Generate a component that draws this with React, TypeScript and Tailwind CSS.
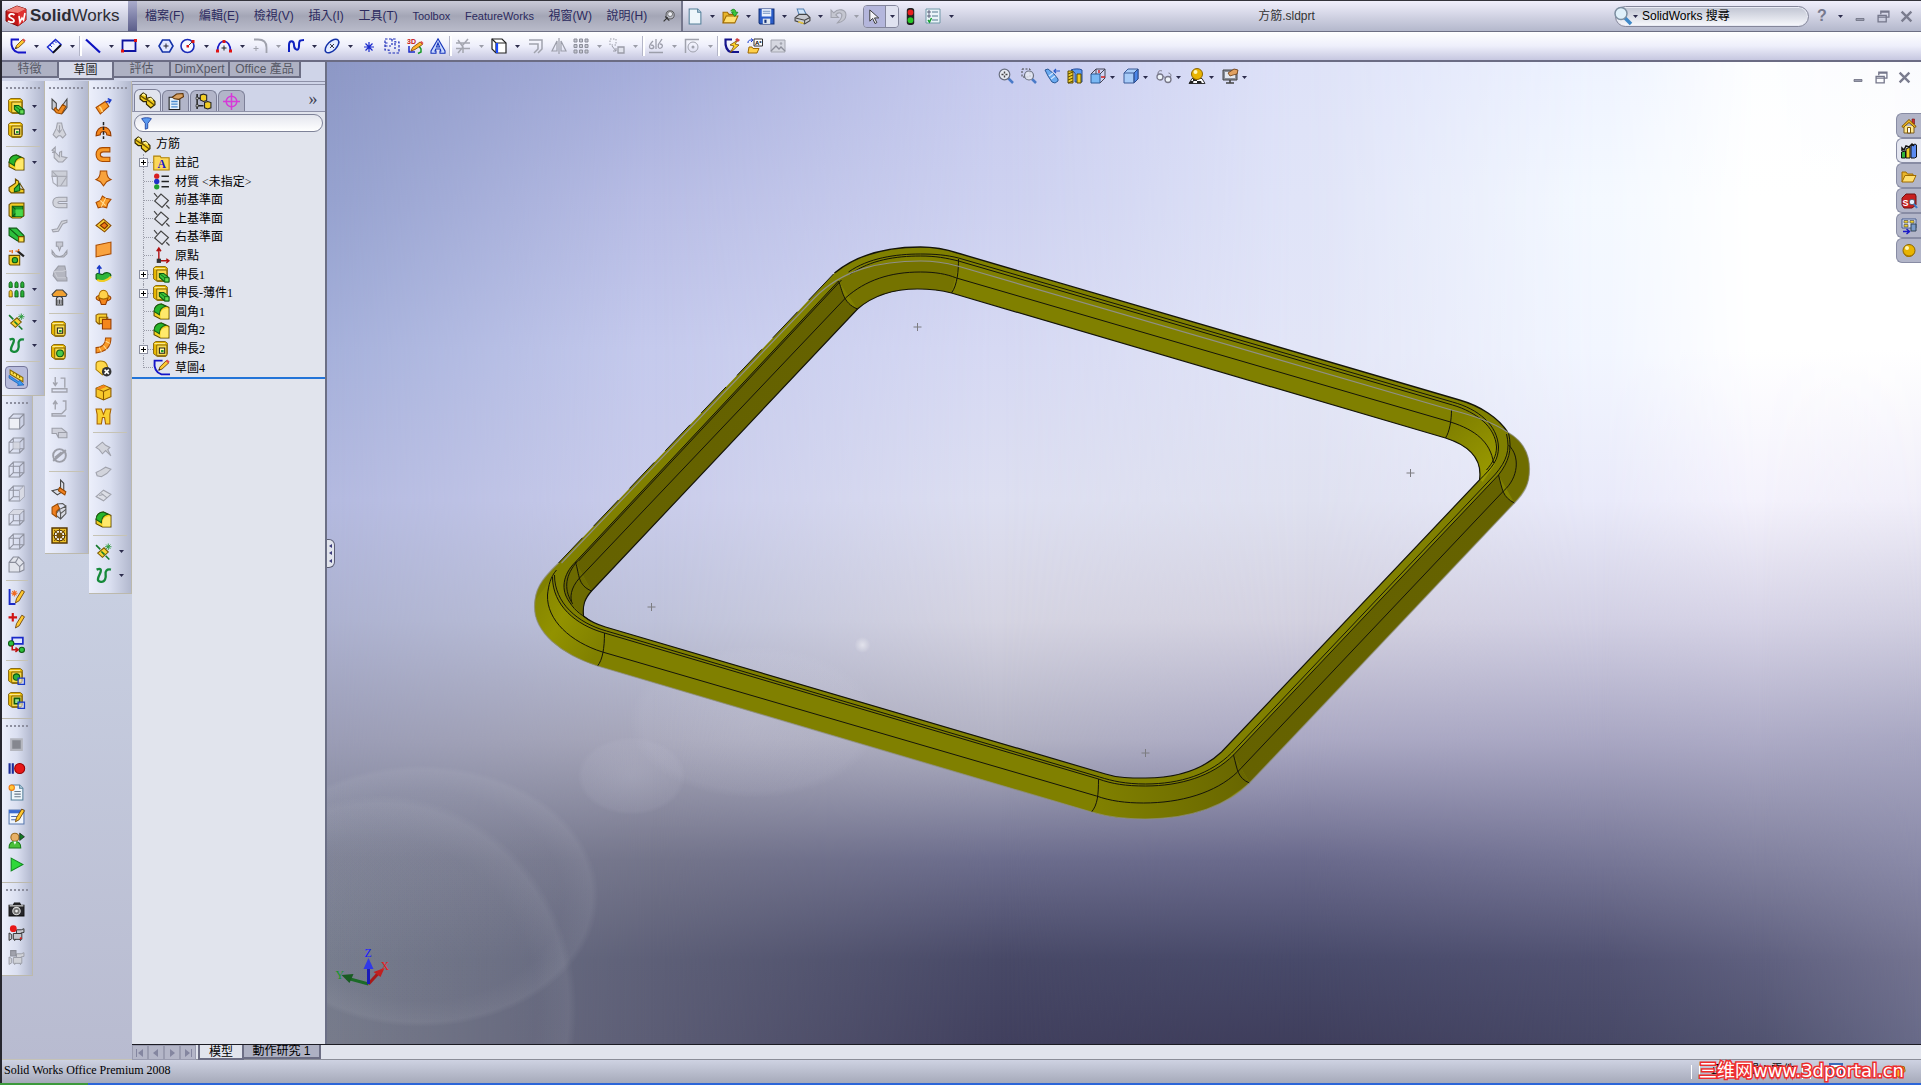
import React from "react";

type Glyphs = Record<string, React.ReactNode>;

/* ---------- icon building blocks ---------- */
const yellowBlock = (
  <>
    <path d="M.5 2 2.500.5h9l2 1.500V12l-1.500 2.500H4L.5 12z" fill="#e8b800" stroke="#7a5a00" strokeWidth=".8" />
    <path d="M1.300 2.500h10.200" fill="none" stroke="#fff0a0" strokeWidth="1" />
    <path d="M3.500 3.800H13v10H3.500z" fill="#f9da4a" stroke="#7a5a00" strokeWidth=".8" />
  </>
);
const pencil = (
  <>
    <path d="m5.500 10.500 1-3 6-6 2.500 2-6.500 6z" fill="#ffc930" stroke="#6b3e00" strokeWidth=".8" />
    <path d="m12 2 1.500-1.500 2.200 2L14.300 4z" fill="#e05050" />
    <path d="m5 11 .8-2 1.200 1.200z" fill="#222" />
  </>
);
const wireCube = (
  <path d="M1 5h10v10H1zM5 1h10v10H5zM1 5l4-4M11 5l4-4M11 15l4-4M1 15l4-4" fill="none" stroke="#9093a0" />
);
const fillet = (
  <>
    <path d="M1 8C1 4 4 1 8 1l7 3v11H7l-6-3z" fill="#f4d21f" stroke="#5d4700" />
    <path d="M1 8C1 4 4 1 8 1l4 2C8 4 6 6 6 11L1 8z" fill="#27b52b" stroke="#145c14" />
    <path d="M7 14.500V11c0-4 3-6 7.500-6v9.500z" fill="#ffe96b" />
  </>
);
const extrude = (
  <>
    {yellowBlock}
    <path d="M6 7h4l5 4v4h-4L6 10.500z" fill="#3ac43a" stroke="#0d5a12" />
    <path d="M11 11h4v4h-4zM6 7l5 4" fill="#66dd55" stroke="#0d5a12" strokeWidth=".8" />
  </>
);
const cut = (
  <>
    {yellowBlock}
    <path d="M6 6.500h5v5H6z" fill="#fff6a8" stroke="#222" />
    <path d="M7.500 8.500h2.500v2H7.500z" fill="#1c9a2a" />
  </>
);
const refGeom = (
  <>
    <path d="m1 2 4 4M10 12l3.500 3.500" stroke="#167a2a" strokeWidth="1.500" />
    <path d="m2.500 9.500 6-5 4 4-5.500 5z" fill="#f8d432" stroke="#7a5a00" />
    <path d="M12.500.5v6M9.500 3.500h6M10.500 1.500l4 4M14.500 1.500l-4 4" stroke="#2d9a3c" strokeWidth=".9" />
    <path d="m6 8 3 3" stroke="#167a2a" strokeWidth="1.500" />
  </>
);
const curve = (
  <path d="M1.500 2.500c4-2 5 0 3 4s-3 7 1 7.500 5-4 4.500-7 1-5.500 5-4.500" fill="none" stroke="#168a3a" strokeWidth="2.200" />
);
const partGold = (
  <>
    <path d="M1 3.500 4 1l3 2v3l4-1 4 4v3l-4 3-4-3.500V9L4 9 1 6.500z" fill="#f1cc1d" stroke="#332800" strokeWidth="1.100" />
    <path d="m2 4 3 2 5 3 4 3M7 6l3 3" fill="none" stroke="#6b5200" strokeWidth="1.200" />
    <path d="m3 3 1.500-1L6 3.500M9 7l2-1 2 2" fill="none" stroke="#fff7a0" strokeWidth="1.300" />
  </>
);
const sheet = (
  <>
    <path d="M3 1h8l3 3v11H3z" fill="#eef6fb" stroke="#55809a" />
    <path d="M11 1v3h3" fill="#bcd6e4" stroke="#55809a" />
  </>
);
const folder = (
  <>
    <path d="M1 14V4h4l1.500 2H12v2" fill="#e9b52b" stroke="#a06b00" />
    <path d="M1 14 4 7.500h11L12 14z" fill="#ffdf70" stroke="#a06b00" />
  </>
);
const goldSphere = (
  <>
    <circle cx="8" cy="7.500" r="6" fill="#e9b400" stroke="#8b6500" />
    <path d="M3 9c1 4 8 5 10.500.5C12 13 9 14 8 14c-3 0-5-2-5-5" fill="#a97800" />
    <circle cx="6" cy="5" r="2" fill="#fff6b8" />
  </>
);
const camcorder = (c: string, d: string) => (
  <>
    <path d="M1 7.500 3.500 9v4L1 14.500zM5 8h8v5.500H5z" fill={c} stroke={d} strokeWidth=".9" />
    <path d="M8 7.500V4.500h4.500L15 3.500V7l-3 .5M6 15l1-1.500M12 15l-1-1.500" fill={c} stroke={d} strokeWidth=".9" />
  </>
);

const glyphs: Glyphs = {
  /* sketch toolbar */
  "Exit sketch": (<><path d="M9 1.500H1.500C.8 8 3 13 8 14.500h8" fill="none" stroke="#1414c8" strokeWidth="1.800" />{pencil}</>),
  "Smart dimension": (<><path d="m1.500 9 8-7.500 5.500 5-8 8z" fill="#f4f8ff" stroke="#1a2acc" strokeWidth="1.500" /><path d="m4 7 2 2M6.500 5l1.500 1.500M8.500 3l2 2" stroke="#1a2acc" /><path d="M7 14.800 15 7" stroke="#111" strokeWidth="1.800" /></>),
  Line: <path d="m1 1.500 14 13" stroke="#0d12c0" strokeWidth="2.200" />,
  Rectangle: (<><path d="M1.500 2.500h13v10.500h-13z" fill="#eef" stroke="#0d12a0" strokeWidth="1.800" /><path d="M0 11.500h3v3H0zM13 1h3v3h-3z" fill="#e01414" /></>),
  Polygon: (<><path d="M4.500 2h7L15 8l-3.500 6h-7L1 8z" fill="#e2e8ff" stroke="#1432a8" strokeWidth="1.600" /><path d="M8 5.500v5M5.500 8h5" stroke="#223" /></>),
  Circle: (<><circle cx="7.500" cy="8" r="6.500" fill="#f4f6ff" stroke="#1a2ab8" strokeWidth="1.600" /><path d="m8 8 4.500-4.500" stroke="#333" /><path d="M6.500 7h2.500v2.500H6.500zM11.500 2h3v3h-3z" fill="#d81414" /></>),
  Arc: (<><path d="M1.500 13C1.500 0 14.500 0 14.500 13" fill="none" stroke="#1a1ac8" strokeWidth="1.700" /><path d="M0 11.500h3v3H0zM13 11.500h3v3h-3zM6.500 2h3v3h-3z" fill="#e01414" /><path d="M8 7.500v5M5.500 10h5" stroke="#222" /></>),
  "Sketch fillet": (<><path d="M2 1.500h4c6 0 8.500 3 8.500 8V15" fill="none" stroke="#a0a2ad" strokeWidth="1.800" /><path d="M4 8v5M1.500 10.500h5" stroke="#a0a2ad" /></>),
  Spline: <path d="M1 14V7c0-5 5-5 5 0s5 7 5 1c0-5 0-6 5-6" fill="none" stroke="#0e20c0" strokeWidth="2" />,
  Ellipse: (<><ellipse cx="8" cy="8" rx="8.500" ry="4.500" transform="rotate(-45 8 8)" fill="#e4ecff" stroke="#1432a8" strokeWidth="1.500" /><path d="m6 6 4 4M10 6l-4 4" stroke="#223" strokeWidth=".9" /></>),
  Point: <path d="M8 4v10M3 9h10M4.500 5.500l7 7M11.500 5.500l-7 7" stroke="#1a2acc" strokeWidth="1.200" />,
  "Construction area": <path d="M1 1h10v3h4v11H5v-3H1zM1 5h4M11 5v6M1 8h6M8 1v6" fill="none" stroke="#1a2ab8" strokeWidth="1.200" strokeDasharray="2.500 1.500" />,
  "3D sketch": (<><text x="0" y="5.500" fontSize="7" fontWeight="700" fill="#c81414" fontFamily="Liberation Sans, sans-serif">3D</text><path d="M2 8v6h6" fill="none" stroke="#1a2ac8" strokeWidth="1.500" /><path d="m12 8 2 3v3l-3 1.500" fill="none" stroke="#1a9a2a" strokeWidth="1.500" /><path d="m4 13 1.500-3.500L13 4l2.500 2.500-7.500 5z" fill="#ffb52b" stroke="#7a3e00" strokeWidth=".8" /><path d="m13 4 1.500-1 2 2-1 1.500z" fill="#e05050" /></>),
  "Sketch text": <path d="M8 .8 15 13v2.200H10V13h.8l-.6-2H5.800L5 13h1v2.200H1V13L6.500 3.500zM8 5 6.500 9h3z" fill="#c8d8ff" stroke="#1432b8" strokeWidth="1.100" />,
  Trim: <path d="M1 5h14M1 10.500h14M3 2l5 7v6M13 1 7 8M3 15l5-6" fill="none" stroke="#a4a6b0" strokeWidth="1.500" />,
  "Convert entities": (<><path d="M1 1h10l4 4v10H5L1 11z" fill="#fff" stroke="#222" strokeWidth="1.200" /><path d="M1 1l4 4h10M5 5v10" fill="none" stroke="#222" strokeWidth="1.200" /><path d="M6 5v10" stroke="#1a4aff" strokeWidth="2.200" /></>),
  Offset: <path d="M1 2h13v9l-4 4M1 6h9v5l-4 4" fill="none" stroke="#a0a2ad" strokeWidth="1.500" />,
  Mirror: <path d="M8 0v16M6 3v10H1zM10 3v10h5z" fill="none" stroke="#9c9eaa" strokeWidth="1.200" />,
  "Linear pattern": <path d="M1 1h3v3H1zM6.500 1h3v3h-3zM12 1h3v3h-3zM1 6.500h3v3H1zM6.500 6.500h3v3h-3zM12 6.500h3v3h-3zM1 12h3v3H1zM6.500 12h3v3h-3zM12 12h3v3h-3z" fill="#c4c6d0" stroke="#8c8e9a" />,
  "Move entities": (<><path d="M1 1h6v6H1z" fill="none" stroke="#999ba6" strokeDasharray="1.500 1.500" /><path d="M9 9h6v6H9z" fill="#e0e2ec" stroke="#999ba6" strokeWidth="1.300" /><path d="m3 8 4 5M7 10v3H4" fill="none" stroke="#999ba6" /></>),
  "Display relations": <path d="M1 14.500h14M8 1v10M5 3C0 8 1 11 4 10.500S6 7 3 7M11 6c-2 3 0 5 2 4s2-4-1-4M14 1l-4 6" fill="none" stroke="#9c9eaa" strokeWidth="1.300" />,
  "Quick snaps": (<><path d="M1.500 15V1.500H15" fill="none" stroke="#a0a2ad" strokeWidth="1.500" /><circle cx="9" cy="9" r="5" fill="none" stroke="#a0a2ad" /><circle cx="9" cy="9" r="1.500" fill="#a0a2ad" /></>),
  "Rapid sketch": (<><path d="M8 1.500H1.500C1 9 3 13 7 14h8" fill="none" stroke="#14148c" strokeWidth="2.200" /><path d="m14 2-8 5 4 1-4 7 9-8-4-1z" fill="#ffd52b" stroke="#7a4a00" strokeWidth=".8" /><path d="m13 0 3 2-2 2-3-2z" fill="#d04040" /></>),
  "Insert block": (<><path d="M7 1h8.500v7H7z" fill="#fff" stroke="#333" /><text x="8" y="7" fontSize="6" fontWeight="700" fontFamily="Liberation Sans, sans-serif">A*</text><path d="M1 5c0-3 2-3 4-3M4 .5 6 2 4 4" fill="none" stroke="#1a3acc" /><path d="m1 15 1-6h3l1 1.500h6L10 15z" fill="#ffd04a" stroke="#a06b00" /></>),
  "Sketch picture": (<><path d="M1 2h14v12H1z" fill="#d5d7e0" stroke="#a4a6b0" /><path d="m1 13 5-5 3 3 2-2 4 4" fill="none" stroke="#8c8e9a" strokeWidth="1.300" /><circle cx="11" cy="5.500" r="1.300" fill="#a4a6b0" /></>),
  /* standard toolbar */
  New: sheet,
  Open: (<>{folder}<path d="M8 3c2-3 5-2 5 1h2l-3 4-3-4h2" fill="#3cc83c" stroke="#0e7a1a" strokeWidth=".7" /></>),
  Save: (<><path d="M1 1h14v14H2l-1-1z" fill="#2a5cc8" stroke="#123078" /><path d="M3.500 1h9v7h-9z" fill="#eaf2ff" /><path d="M4.500 3h7M4.500 5h7" stroke="#7090c0" /><path d="M4.500 10h7v5h-7z" fill="#dfe6ee" /><path d="M6 11h2v3H6z" fill="#123078" /></>),
  Print: (<><path d="m5 7-2-6h6l3 6" fill="#cfe4fa" stroke="#5480b0" /><path d="m1 9 4-3h7l3 3v3l-5 3-9-3z" fill="#c8cad0" stroke="#444" /><path d="m1.500 9.500 8.500 2 5-2.500M10 12v3" fill="none" stroke="#444" /><path d="m4 13 5 1.500" stroke="#e8c840" strokeWidth="1.500" /></>),
  Undo: <path d="M1 2v7h7L5.500 6.500C8 3 12 5 11 8c-.5 3-3 4.500-4 6 5-1 8-4 8-7.500C15 1.500 8-.5 3.500 4.500z" fill="#c4c6d0" stroke="#a0a2ad" />,
  Select: <path d="M3 1v12l3-3 2.500 5.500 2-1L8 9.500h4.500z" fill="#f4f4f8" stroke="#333" />,
  Rebuild: (<><rect x="4.500" y="0" width="7" height="16" rx="2.500" fill="#222" /><circle cx="8" cy="4.200" r="2.700" fill="#e82020" /><circle cx="8" cy="11.500" r="2.700" fill="#28c828" /></>),
  Options: (<><path d="M1 1h14v14H1z" fill="#eaf4f8" stroke="#7098a8" /><path d="M3 3h2v2H3zM3 7h2v2H3z" fill="none" stroke="#446" strokeWidth=".8" /><path d="M7 4h6M7 8h6M7 12h6" stroke="#557a90" strokeWidth="1.200" /><path d="m3 12 1.500 2L6.500 10" fill="none" stroke="#16a030" strokeWidth="1.500" /></>),
  Pin: (<><circle cx="10" cy="6" r="5" fill="#b8bac4" stroke="#444" /><circle cx="10" cy="5" r="3" fill="#eceef4" stroke="#666" /><path d="m7 9-5 5M4 8l5 5" stroke="#333" strokeWidth="1.400" /></>),
  /* features column */
  Extrude: extrude,
  "Extruded cut": cut,
  Fillet: fillet,
  Rib: (<><path d="m1 9 6-4V1l3 2v7l5 1v3H3l-2-2z" fill="#f2cd24" stroke="#6b4e00" /><path d="m6 10 5-5v7l-5 1z" fill="#2fb53a" stroke="#0d5a12" /><path d="m11 5 4 6" stroke="#6b4e00" /></>),
  Shell: (<><path d="M1 2.500 3 1h12v12l-3 2H4l-3-2z" fill="#f2cd24" stroke="#6b4e00" /><path d="M4 4h10v9.500H4z" fill="#1c9a2a" stroke="#0d5a12" /><path d="M7 7h7v6.500H7z" fill="#4ad84a" /><path d="m4 4 3 3M4 13.500 7 11" stroke="#0d5a12" /></>),
  Draft: (<><path d="M1 2h7l7 7v5H9L1 9z" fill="#2cc03c" stroke="#0d5a12" /><path d="m1 2 9 8h5M10 10v5" fill="none" stroke="#0d5a12" /><path d="M10 10h5v5h-5z" fill="#ffe04a" stroke="#6b4e00" /></>),
  "Hole wizard": (<><path d="M1 6h10v9H2l-1-1z" fill="#f2cd24" stroke="#6b4e00" /><circle cx="6.500" cy="10.500" r="2.500" fill="#2fb53a" stroke="#0d5a12" /><path d="m9 2 6 5" stroke="#222" strokeWidth="2" /><path d="M1 2h2M4 1v3M7 2h2M10 0v2" stroke="#e86a10" strokeWidth="1.300" /></>),
  Pattern: (<><path d="M1 3c0-3 3-3 3 0v3H1zM6.500 3c0-3 3-3 3 0v3h-3zM12 3c0-3 3-3 3 0v3h-3zM6.500 11c0-3 3-3 3 0v4h-3zM12 11c0-3 3-3 3 0v4h-3z" fill="#28b038" stroke="#0d5a12" strokeWidth=".8" /><path d="M1 11c0-3 3-3 3 0v4H1z" fill="#f2cd24" stroke="#6b4e00" strokeWidth=".8" /></>),
  "Reference geometry": refGeom,
  Curves: curve,
  Instant3D: (<><path d="m2 1 12 7v4L2 5z" fill="#ffe14a" stroke="#8a6a00" /><path d="M5 3v2M8 4.500v2.500M11 6.500v2" stroke="#8a6a00" /><path d="m1 6 9 6 .8-1.500L15 15l-6 .5.800-1.500L1 8.500z" fill="#3a9af0" stroke="#1a5ab0" strokeWidth=".7" /></>),
  /* view cubes */
  "Front view": (<><path d="M1 5h10v10H1z" fill="#eef0f6" stroke="#8a8d9a" /><path d="m1 5 4-4h10v10l-4 4M11 5l4-4" fill="none" stroke="#8a8d9a" /></>),
  "Back view": (<>{wireCube}<path d="M5 5h6v6H5z" fill="#d4d6e0" /></>),
  "Left view": wireCube,
  "Right view": (<>{wireCube}<path d="m11 5 4-4v10l-4 4z" fill="#d8dae4" /></>),
  "Top view": (<>{wireCube}<path d="m1 5 4-4h10l-4 4z" fill="#d8dae4" /></>),
  "Bottom view": wireCube,
  Isometric: <path d="M1 6 5 1h5l5 5v7l-4 2H1zM1 6h6l4 4v5M7 6l3-5M11 10l4-4" fill="#e2e4ec" stroke="#8a8d9a" />,
  "New sketch": (<><path d="M1.500 1v14H7" fill="none" stroke="#1a2ac8" strokeWidth="1.800" /><path d="M6 2v6M3 5h6M4 3l4 4M8 3 4 7" stroke="#f06a20" /><path d="m7 14 1-4 5-8 2.500 1.500-5 8.500z" fill="#ffc930" stroke="#6b3e00" strokeWidth=".8" /></>),
  "Add point": (<><path d="M4.500 1v8M.5 5h8" stroke="#d01414" strokeWidth="2" /><path d="m7 15 1-4 5-8 2.500 1.500-5 8.500z" fill="#ffc930" stroke="#6b3e00" strokeWidth=".8" /></>),
  "Convert path": (<><path d="M4 1.500h10v6H4z" fill="#dfe6ff" stroke="#1a2ac8" strokeWidth="1.600" /><circle cx="3" cy="7" r="2.500" fill="#2cc03c" stroke="#0d5a12" /><circle cx="13" cy="13" r="2.500" fill="#2cc03c" stroke="#0d5a12" /><path d="M4 9v4h5M7 11l2.500 2L7 15" fill="none" stroke="#c01414" strokeWidth="1.500" /></>),
  "Boss on plane": (<>{yellowBlock}<circle cx="8" cy="8.500" r="3" fill="#2cb03c" stroke="#0d5a12" /><path d="M9.500 9.500h6v6h-6z" fill="#dfe6ff88" stroke="#1a3ac8" strokeWidth="1.200" /></>),
  "Cut on plane": (<>{yellowBlock}<path d="M6 6h5v5H6z" fill="#9be08a" stroke="#0d5a12" strokeWidth="1.500" /><path d="M9.500 9.500h6v6h-6z" fill="#dfe6ff88" stroke="#1a3ac8" strokeWidth="1.200" /></>),
  /* macro */
  Stop: <path d="M3 3h10v10H3z" fill="#85878f" stroke="#b4b6be" strokeWidth="2" />,
  "Record pause": (<><path d="M1.500 3v10M4.500 3v10" stroke="#1a2a98" strokeWidth="2" /><circle cx="11" cy="8" r="4.700" fill="#e81818" stroke="#900" /></>),
  "New macro": (<>{sheet}<path d="M6 7h6M6 9.500h6M6 12h6" stroke="#6a7a8a" /><circle cx="3.500" cy="3.500" r="2.500" fill="#ffc83a" stroke="#f07a10" /></>),
  "Edit macro": (<><path d="M1 2h14v13H1z" fill="#f0f5fc" stroke="#5a7ab0" /><path d="M1 2h14v3H1z" fill="#3a6ad0" /><path d="M3 8h6M3 11h5" stroke="#4a6ab0" /><path d="m7 13 1-4 5-8 2.500 1.500-5 8.500z" fill="#ffc930" stroke="#6b3e00" strokeWidth=".8" /></>),
  "Run as user": (<><circle cx="6.500" cy="5" r="3.800" fill="#e8b068" stroke="#9a6a20" /><path d="M1 15c0-5 2-6 5.500-6s5.500 1 5.500 6z" fill="#4ac03a" stroke="#1a7a1a" /><path d="m5 9 1.500 3L8 9" fill="#fff" /><path d="m11 1 4.500 3.500L11 8z" fill="#147a24" stroke="#111" strokeWidth=".6" /></>),
  Run: <path d="m3 2 11 6L3 14z" fill="#2ed83a" stroke="#108a20" />,
  Snapshot: (<><path d="M1 4h4l1-2h5l1 2h3v10H1z" fill="#26262a" stroke="#111" /><path d="M1.500 4.500h13" stroke="#aaa" strokeWidth="1.500" /><circle cx="8" cy="9.500" r="3.500" fill="#777" stroke="#ddd" /><circle cx="8" cy="9.500" r="1.300" fill="#eee" /></>),
  "Record video": (<>{camcorder("#c4c6cc", "#333")}<circle cx="5" cy="3.500" r="3.200" fill="#e81818" /><circle cx="12" cy="12.500" r="1" fill="#e81818" /></>),
  "Stop video": (<>{camcorder("#d0d2d8", "#9a9ca6")}<path d="M2.500 1.500h5v5h-5z" fill="#a0a2ac" stroke="#8a8c96" /></>),
  /* sheet-metal column */
  "Base flange": (<><path d="m1 1 4 4v8L1 10zM10 8l5-7v8l-4 5z" fill="#c8ccd6" stroke="#444" /><path d="m4 9 3 3 4-6 3 2-4 7-5-1-2-3z" fill="#f08a20" stroke="#9a4a00" /></>),
  Cone: <path d="M6 1h4l1 5 3 6-3 3-2-2H7l-2 2-3-3 3-6zM8 3v6M6 7l2 3 2-3" fill="#d2d4dc" stroke="#a0a2ac" />,
  "Edge flange": <path d="M1 4 4 1v5l4 4V6l2-1v5l5 1-4 4H7L3 11V5zM4 6H1" fill="#d2d4dc" stroke="#a0a2ac" />,
  "Miter flange": (<><path d="M1 1h14v14H6V6H1z" fill="#cccfd8" stroke="#a8aab4" /><path d="M1 6h5v9l-4-3zM1 1l5 5M6 6h9M15 6l-6 9" fill="none" stroke="#a8aab4" /></>),
  Hem: <path d="M15 3H7C0 3 0 13 7 13h8V9H8C6 9 6 7 8 7h7z" fill="#d2d4dc" stroke="#9c9ea8" />,
  Jog: <path d="m1 12 5-1 4-7 5-1v2l-4 1.500-4 7L2 14z" fill="#d2d4dc" stroke="#a0a2ac" />,
  Bend: (<><path d="M5 1h6v4H9.500L8 9 6.500 5H5z" fill="#c6c8d2" stroke="#9c9ea8" /><path d="m1 9 3 4c2 2 6 2 8 0l3-4v3l-3 3H4l-3-3z" fill="#d2d4dc" stroke="#9c9ea8" /></>),
  Break: (<><path d="M3 6 7 1h6l1 5v5l1 1v3H6l-4-5z" fill="#b4b6c0" stroke="#9a9ca6" /><path d="M3 6h8l3-1M3 6l3 6h8" fill="none" stroke="#c8cad2" /></>),
  Forming: (<><path d="m1 5 4-4h6l4 4-1 2H2z" fill="#f0a030" stroke="#444" /><path d="M5 10c0-4 6-4 6 0v5H5z" fill="#d8dae2" stroke="#333" /><path d="M6.500 10v4M8 10v4M9.500 10v4" stroke="#333" strokeWidth=".8" /></>),
  Cut2: cut,
  "Simple hole": (<>{yellowBlock}<circle cx="8.500" cy="8.800" r="3.200" fill="#4ac84a" stroke="#0d5a12" /></>),
  Unfold: <path d="M4 1v8M2 6l2 3 2-3M9 2h4v9M1 12h14v3H1z" fill="none" stroke="#a2a4ae" strokeWidth="1.300" />,
  Fold: <path d="M4 9V1M2 4l2-3 2 3M11 1h3v8l-4 4H1v2h13" fill="none" stroke="#a2a4ae" strokeWidth="1.300" />,
  Flatten: <path d="M1 4h9l5 4v5H7L5 9H1zM7 13V8h8" fill="#ced0da" stroke="#9c9ea8" />,
  "No bends": (<><circle cx="8" cy="8" r="6" fill="none" stroke="#9c9ea8" strokeWidth="1.800" /><path d="m2 13 12-10M4 10l6-5" stroke="#9c9ea8" strokeWidth="2" /></>),
  Rip: (<><path d="m1 11 8-2V1l3 3v7l-6 4z" fill="#dcdee6" stroke="#444" /><path d="m8 8 6 4-1 3-6-4z" fill="#f08020" stroke="#9a4a00" /></>),
  "Corner relief": (<><path d="m8 6 6-3v7l-5 5-5-4z" fill="#d8dae2" stroke="#555" /><path d="m1 4 5-3 2 4-3 3v5l-4-3z" fill="#f08020" stroke="#9a4a00" /><path d="m8 6 1 4 5-4M9 10v5M6 1l5-.5 3 2.500" fill="none" stroke="#555" /></>),
  Vent: (<><path d="M1 1h14v14H1z" fill="#f2c52b" stroke="#5a3a00" strokeWidth="1.400" /><circle cx="8" cy="8" r="5" fill="#fff" stroke="#4a3000" /><circle cx="8" cy="8" r="2.300" fill="none" stroke="#4a3000" /><path d="M8 1v14M1 8h14M3 3l10 10M13 3 3 13" stroke="#7a5200" /></>),
  /* surface column */
  "Surface extrude": (<><path d="m1 9 9-6 3 5-8 7z" fill="#f89a28" stroke="#a84a00" /><path d="M4 8c2 1 2 3 3 5" stroke="#ffd88a" fill="none" strokeWidth="1.500" /><path d="m10 4 5-2M12 .5 15 2l-2 3" fill="none" stroke="#1a3ac8" strokeWidth="1.300" /></>),
  "Surface revolve": (<><path d="M1 13C1 2 15 2 15 13l-4-1c0-4-6-4-6 0z" fill="#f4861c" stroke="#963c00" /><path d="M8 0v16" stroke="#222" strokeWidth="1.400" strokeDasharray="3 1.500" /></>),
  "Surface sweep": <path d="M14 1.500H7C-1 1.500-1 14.500 7 14.500h7v-4H8c-4 0-4-5 0-5h6z" fill="#f89a28" stroke="#a84a00" />,
  "Surface loft": <path d="M5 1h6c0 4 1 7 4 8l-4 2-3 4-3-4-4-2c3-1 4-4 4-8z" fill="#f8a23c" stroke="#a84a00" />,
  "Boundary surface": (<><path d="m1 8 4-2 2-4 3 2 5 1-3 4-1 4-4-1-4 1z" fill="#f89a28" stroke="#a84a00" /><path d="m5 6 5 5M10 4 6 12" stroke="#ffdc94" /></>),
  "Offset surface": (<><path d="m1 8 7-6 7 6-6 6z" fill="#f8d032" stroke="#8a4a00" /><path d="m5 8 4-3 3 3-3 3z" fill="#f07a18" stroke="#7a3200" /></>),
  "Planar surface": <path d="m1 4 14-3v11L1 15z" fill="#f9a340" stroke="#a84a00" />,
  Radiate: (<><path d="M1 9c2-3 3 0 6 0 3-3 8-2 8 1-1 4-9 7-14 3z" fill="#2fb53a" stroke="#0d5a12" /><path d="M2 14c4 2 10 1 13-3" fill="none" stroke="#f2cd24" strokeWidth="2" /><path d="M4 8V1M2 3.500 4 1l2 2.500" fill="none" stroke="#1a3ac8" strokeWidth="1.500" /></>),
  Knit: (<><ellipse cx="8" cy="8.500" rx="7" ry="3" fill="#f4a01c" stroke="#963c00" /><path d="M4 9h8l-2 5.500H6z" fill="#f4861c" stroke="#963c00" /><path d="M3.500 8C3.500-1 12.500-1 12.500 8c-3 2-6 2-9 0z" fill="#ffd24a" stroke="#a86a00" /></>),
  Thicken: (<><path d="M1 2 3 1h8v9H3l-2-2z" fill="#f8d032" stroke="#8a5a00" /><path d="M4 4h8v2M4 4v7" fill="none" stroke="#8a5a00" /><path d="M7 6h8v9H7z" fill="#f4861c" stroke="#963c00" /></>),
  Extend: (<><path d="M10 1h5c0 8-5 13-14 14v-5c6 0 9-4 9-9z" fill="#f89a28" stroke="#a84a00" /><path d="m4 10 2 4M8 8l3 4M10 4l4 2" stroke="#ffdc94" /></>),
  "Delete face": (<><path d="M1 4c0-4 8-4 10 0l2 6-6 4-6-5z" fill="#ffd84a" stroke="#a87a00" /><circle cx="11" cy="11" r="4.500" fill="#333" /><path d="m9 9 4 4M13 9l-4 4" stroke="#fff" strokeWidth="1.500" /></>),
  "Replace face": (<><path d="m1 4 7-3 7 3v8l-7 3-7-3z" fill="#f8c82b" stroke="#8a5a00" /><path d="m1 4 7 3 7-3M8 7v8" fill="none" stroke="#8a5a00" /><path d="m1 4 7-3 3 1.500L4 5.500z" fill="#f4861c" /></>),
  "Split body": <path d="M1 1h5l2 5 2-5h5l-1 5v9h-4l-1-6H7l-1 6H2V6z" fill="#f8d032" stroke="#a86200" />,
  "Untrim 1": <path d="m1 7 6-5 3 3 4 2-2 2 3 6-5-5-3 3-3-4z" fill="#d2d4dc" stroke="#a0a2ac" />,
  "Untrim 2": <path d="m1 8 4-2 5-3 5 2-4 4-5 3-4-1z" fill="#d2d4dc" stroke="#a0a2ac" />,
  "Untrim 3": <path d="m1 9 7-6 7 4-7 6zM6 6l5 4M4 8l4-1" fill="#dcdee6" stroke="#a0a2ac" />,
  "Fillet surface": fillet,
  "Reference geometry 2": refGeom,
  "Curves 2": curve,
  /* view toolbar */
  "Zoom to fit": (<><path d="m10 10 5 5" stroke="#4a7ac8" strokeWidth="2.500" /><circle cx="6.500" cy="6.500" r="5.300" fill="#e6eaf2" stroke="#6a7080" strokeWidth="1.200" /><path d="M6.500 3.500v6M3.500 6.500h6" stroke="#444" strokeDasharray="2 2" strokeWidth="1.400" /></>),
  "Zoom to area": (<><path d="M1 1h8v8H1z" fill="none" stroke="#444" strokeDasharray="2 1.500" /><path d="m11 11 4 4" stroke="#4a7ac8" strokeWidth="2.500" /><circle cx="8" cy="7.500" r="4.500" fill="#e6eaf2cc" stroke="#6a7080" strokeWidth="1.200" /></>),
  "Previous view": (<><path d="m1 2 3-1 6 5 4 5v2l-3 2-3-1-4-6z" fill="#6aaaf0" stroke="#2a5a98" /><path d="m5 8 4-3M7 11l4-3" stroke="#cfe4ff" strokeWidth="1.500" /><path d="M16 3h-6M12 1l-2 2 2 2" fill="none" stroke="#2a5ac8" strokeWidth="1.200" /></>),
  "Section view": (<><path d="M4 2c3-1.500 9-1.500 11 0v12H8V5z" fill="#5a9af0" stroke="#224a98" /><path d="M1 3h5v12H1zM10 6h4v9h-4z" fill="#f0cc2a" stroke="#5a4a00" /><path d="m1 6 5-2M1 9l5-2M1 12l5-2M1 15l5-2" stroke="#5a4a00" /></>),
  "View orientation": (<><path d="M1 6h9v9H1z" fill="#7ab8f4" stroke="#2a5a98" /><path d="m1 6 5-5h9v9l-5 5M6 1v5M10 6l5-5" fill="none" stroke="#445" /><path d="M9 2v3M15 9h-4" stroke="#d02020" strokeWidth="1.400" /></>),
  "Display style": (<><path d="m1 5 4-4h10v10l-4 4H1z" fill="#a8ccf8" stroke="#3a5a98" /><path d="m11 5 4-4v10l-4 4z" fill="#4a86e8" stroke="#2a4a88" /><path d="M1 5h10v10" fill="none" stroke="#3a5a98" /></>),
  "Hide or show": (<><circle cx="4" cy="9" r="3" fill="#eef4fa" stroke="#778" strokeWidth="1.300" /><circle cx="12" cy="11.500" r="3" fill="#eef4fa" stroke="#778" strokeWidth="1.300" /><path d="M6.500 9c1-1 2 0 3 1M2 6c0-3 2-4 4-3M14.500 9c1-2 0-4-2-4" fill="none" stroke="#778" /></>),
  Appearance: (<><path d="m0 15.500 3-5h10l3 5z" fill="#fff" stroke="#333" /><path d="m0 15.500 1.500-2.500h3L4 15.500zM8 13h4l1 2.500H8zM4 11h4v2H4z" fill="#222" /><circle cx="8" cy="6" r="5.500" fill="#e9b400" stroke="#8b6500" /><circle cx="6.500" cy="4" r="2" fill="#fff6b8" /></>),
  Scene: (<><path d="M1 2h14v10H1z" fill="#8a8e9a" stroke="#444" /><path d="M3 4h10v6H3z" fill="#e4e8f0" /><path d="M4 15h8M8 12v3" stroke="#444" strokeWidth="1.600" /><path d="m6 5 6-4 4 1-1 4-4 1-3 1z" fill="#e0a060" stroke="#6a3a10" strokeWidth=".8" /></>),
  /* task pane */
  Home: (<><path d="M3 8v7h10V8" fill="#ffe88a" stroke="#7a5a20" /><path d="M11 1h2.500v5H11z" fill="#c83030" stroke="#701010" strokeWidth=".6" /><path d="m.8 8.500 7.200-7 7.200 7-1.500 1L8 4.500 2.300 9.500z" fill="#f0b820" stroke="#7a5200" /><path d="M6.500 9.500h3V15h-3z" fill="#fff" stroke="#7a5200" /></>),
  "Design library": (<><path d="m.5 9 4-1v7h-4z" fill="#2fb53a" stroke="#111" /><path d="m5 6 4-2v11H5z" fill="#f2cd24" stroke="#111" /><path d="m10 3 4-2 1.500 1v12l-2 1H10z" fill="#5a8af0" stroke="#111" /><path d="M1 8V5l2 2 2-4 3 1 3-3 2 2" stroke="#111" strokeWidth="1.500" fill="none" /></>),
  "File explorer": folder,
  Search: (<><path d="m1 5 4-4h9l1 2v9l-4 3H3l-2-3z" fill="#c82020" stroke="#701010" /><text x="1.500" y="12.500" fontSize="9" fontWeight="700" fill="#fff" fontFamily="Liberation Sans, sans-serif">S</text><circle cx="11" cy="9" r="2.800" fill="#e0f0ff" stroke="#556" /><path d="m13 11 3 4" stroke="#3a7ac8" strokeWidth="2" /></>),
  "View palette": (<><path d="M1 1h14v9H1z" fill="#dfe4f0" stroke="#445a90" /><path d="M3 2.500h4v2.500H3zM9 2.500h4v2.500H9zM3 6.500h4v2.500H3z" fill="#f0d02a" stroke="#555" strokeWidth=".7" /><path d="M10 6h5v7h-5z" fill="#7a9ac8" stroke="#345" /><path d="M2 13.500h6M5.500 11l3 2.500-3 2.500" fill="none" stroke="#1a1ac8" strokeWidth="1.500" /></>),
  "Appearances pane": goldSphere,
  /* manager tabs and tree */
  part: partGold,
  property: (<><path d="M2 4h10v11.500H2z" fill="#e4f0fb" stroke="#222" /><path d="M4 8h6M4 10.500h6M4 13h6" stroke="#4a8ad0" strokeWidth="1.200" /><path d="m5 4 4-3 6-.5.500 3L11 6 7 5.500z" fill="#d8a060" stroke="#5a3208" /></>),
  config: (<><path d="M2 1v14M2 5h5M2 12h6" stroke="#222" strokeWidth="1.400" fill="none" /><path d="m5 2 3-1 3 1v5L8 8 5 6.500zM9 9l3-1 3 1v5l-3 1-3-1z" fill="#f2cd24" stroke="#222" /><path d="M1 4h2v2H1zM1 11h2v2H1z" fill="#fff" stroke="#222" strokeWidth=".7" /></>),
  dimx: (<><circle cx="8" cy="8" r="5" fill="none" stroke="#d63ad8" strokeWidth="1.400" /><path d="M8 0v16M0 8h16" stroke="#d63ad8" strokeWidth="1.400" /></>),
  filter: <path d="M2 2c3-1.500 9-1.500 12 0L9.500 8v6L6.500 15V8z" fill="#5a9af0" stroke="#1a3a98" />,
  annot: (<><path d="M.7 2h6l1 1.500h7.500V15H.7z" fill="#fbd75a" stroke="#b08000" /><text x="4.300" y="13" fontSize="11" fontWeight="700" fill="#1a1ac8" fontFamily="Liberation Serif, serif">A</text></>),
  material: (<><circle cx="3.500" cy="3" r="2.500" fill="#d82020" /><circle cx="3.500" cy="8" r="2.500" fill="#2030c8" /><circle cx="3.500" cy="13" r="2.500" fill="#20a030" /><path d="M8 3h7M8 8h7M8 13h7" stroke="#222" strokeWidth="1.300" /></>),
  plane: <path d="m1.500 8.500 6-6.500 7 6-6 6.500zM1 1l3 3.500M12.500 12.500l3 3" fill="none" stroke="#444" strokeWidth="1.100" />,
  origin: (<><path d="M5.500 13V1M3.500 4l2-3 2 3M5.500 13H15M12.500 11l2.500 2-2.500 2" fill="none" stroke="#b01010" strokeWidth="1.300" /><path d="M3.500 11h4v4h-4z" fill="#333" /></>),
  extrude,
  fillet,
  cut,
  sketch: (<><path d="M9 1.500H1.500C.8 8 3 13 8 14.500h8" fill="none" stroke="#1414c8" strokeWidth="1.800" />{pencil}</>),
};

function Icon({ name, size = 17 }: { name: string; size?: number }) {
  return (
    <svg viewBox="0 0 16 16" width={size} height={size} aria-hidden="true" className="block shrink-0 overflow-visible">
      {glyphs[name]}
    </svg>
  );
}

function Caret({ dim }: { dim?: boolean }) {
  return (
    <svg viewBox="0 0 5 3" width="5" height="3" aria-hidden="true" className="block">
      <path d="M0 0h5L2.500 3z" fill={dim ? "#9b9da8" : "#2c2c4c"} />
    </svg>
  );
}

/* ---------- title bar ---------- */
const menus = ["檔案(F)", "編輯(E)", "檢視(V)", "插入(I)", "工具(T)", "Toolbox", "FeatureWorks", "視窗(W)", "說明(H)"];

function WindowButtons({ size }: { size: string }) {
  return (
    <div className={size}>
      <button aria-label="Minimize" className="flex h-4 w-4 items-center justify-center">
        <svg viewBox="0 0 12 12" width="12" height="12"><path d="M2 8.500h8v2H2z" fill="#9a9cae" stroke="#6c6e80" strokeWidth=".8" /></svg>
      </button>
      <button aria-label="Restore" className="flex h-4 w-4 items-center justify-center">
        <svg viewBox="0 0 12 12" width="13" height="13"><path d="M3.500 4V1H11v5.500H8.500M1 5h7.500v6H1zM1 6.500h7.500M4 2h7" fill="none" stroke="#74768a" strokeWidth="1.200" /></svg>
      </button>
      <button aria-label="Close" className="flex h-4 w-4 items-center justify-center">
        <svg viewBox="0 0 12 12" width="13" height="13"><path d="m1.500 1.500 9 9M10.500 1.500l-9 9" stroke="#7a7c8e" strokeWidth="2.200" /></svg>
      </button>
    </div>
  );
}

function TitleBar() {
  const std: [string, boolean][] = [["New", false], ["Open", false], ["Save", false], ["Print", false], ["Undo", true]];
  return (
    <header className="flex h-[31px] shrink-0 items-stretch border-b border-[#6d6f84] bg-linear-to-b from-[#f0effc] to-[#b4b8cc] font-['Liberation_Sans','Noto_Sans_CJK_TC',sans-serif]">
      <div className="flex w-[126px] items-center gap-[3px] pl-[3px]">
        <svg viewBox="0 0 22 22" width="22" height="22" role="img" aria-label="SolidWorks cube">
          <path d="m1 6 11-5 9 3v11l-8 6-12-5z" fill="#c41818" stroke="#7a0a0a" />
          <path d="m1 6 11-5 9 3-8 4z" fill="#f08078" />
          <path d="m13 8 8-4v11l-8 6z" fill="#e03030" />
          <path d="M9.500 10C7 8 4 9 4 11s5 2 5 4.500-4 2-6 .5" fill="none" stroke="#fff" strokeWidth="1.800" />
          <path d="m14 11 1 6 2-4 1.500 2L20 8" fill="none" stroke="#fff" strokeWidth="1.600" />
        </svg>
        <span className="text-[17px] leading-5 text-[#2c2c34]"><b>Solid</b>Works</span>
      </div>
      <div className="w-[9px] bg-linear-to-b from-[#aaaccc] to-[#5c5e8a]" />
      <nav className="flex w-[546px] items-center border-r-2 border-[#74768c] bg-linear-to-b from-[#c9cad8] via-[#a4a6b6] to-[#b9bbca] pl-[8px] text-[12px] text-[#2c2a5e]">
        <div className="flex flex-1 items-center justify-between">
          {menus.map((m) => (
            <button key={m} className={m.endsWith(")") ? "text-[12px]" : "text-[11px]"}>{m}</button>
          ))}
          <button aria-label="Pin menu" className="mr-[6px]"><Icon name="Pin" size={13} /></button>
        </div>
      </nav>
      <div className="flex items-center">
        {std.map(([n, dim]) => (
          <React.Fragment key={n}>
            <button aria-label={n} className="flex w-[22px] justify-center"><Icon name={n} /></button>
            <button aria-label={n + " menu"} className="flex w-[14px] justify-center"><Caret dim={dim} /></button>
          </React.Fragment>
        ))}
        <div className="flex h-[23px] w-[36px] overflow-hidden rounded border border-[#84869c]">
          <button aria-label="Select" className="flex w-[22px] items-center justify-center border-r border-[#84869c] bg-[#b4b6dc]"><Icon name="Select" size={15} /></button>
          <button aria-label="Select menu" className="flex flex-1 items-center justify-center bg-[#e0e2f0]"><Caret /></button>
        </div>
        <button aria-label="Rebuild" className="flex w-[22px] justify-center"><Icon name="Rebuild" /></button>
        <button aria-label="Options" className="ml-[1px] flex w-[22px] justify-center"><Icon name="Options" size={16} /></button>
        <button aria-label="Options menu" className="flex w-[14px] justify-center"><Caret /></button>
      </div>
      <h1 className="flex flex-1 items-center justify-center text-[12px] text-[#333]">方筋.sldprt</h1>
      <div className="flex items-center pr-[7px]">
        <label className="flex h-[21px] w-[194px] items-center rounded-full border border-[#84869a] bg-linear-to-b from-[#c0c4d2] to-[#f8f9fd] shadow-[inset_0_0_0_1px_#e8eaf4]">
          <svg viewBox="0 0 20 20" width="20" height="20" className="-ml-[3px]" aria-hidden="true">
            <path d="m11 11 7 7" stroke="#3f88c8" strokeWidth="3.500" />
            <circle cx="8" cy="7.500" r="6" fill="#dff0fa" stroke="#7c8ea0" strokeWidth="1.500" />
          </svg>
          <Caret />
          <input aria-label="SolidWorks 搜尋" defaultValue="SolidWorks 搜尋" className="ml-[4px] w-[140px] bg-transparent text-[12px] text-black outline-none" />
        </label>
        <button aria-label="Help" className="ml-[7px] w-[12px] text-[16px] font-bold text-[#77798e]">?</button>
        <button aria-label="Help menu" className="flex w-[24px] justify-center"><Caret /></button>
        <WindowButtons size="flex gap-[7px]" />
      </div>
    </header>
  );
}

/* ---------- sketch toolbar ---------- */
type Tool = [string, ("menu" | "dim" | "solo")?] | "|";
const sketchTools: Tool[] = [
  ["Exit sketch", "menu"], ["Smart dimension", "menu"], "|", ["Line", "menu"], ["Rectangle", "menu"], ["Polygon", "solo"],
  ["Circle", "menu"], ["Arc", "menu"], ["Sketch fillet", "dim"], ["Spline", "menu"], ["Ellipse", "menu"], ["Point", "solo"],
  ["Construction area", "solo"], ["3D sketch", "solo"], ["Sketch text", "solo"], "|", ["Trim", "dim"],
  ["Convert entities", "menu"], ["Offset", "solo"], ["Mirror", "solo"], ["Linear pattern", "dim"], ["Move entities", "dim"], "|",
  ["Display relations", "dim"], ["Quick snaps", "dim"], "|", ["Rapid sketch", "solo"], ["Insert block", "solo"], ["Sketch picture", "solo"],
];

function SketchToolbar() {
  return (
    <div role="toolbar" aria-label="Sketch" className="flex h-[30px] shrink-0 items-center border-b-2 border-[#6b6c84] bg-linear-to-b from-white via-[#eeeffb] to-[#c6c7e0] pb-[1px] pl-[5px]">
      {sketchTools.map((t, i) =>
        t === "|" ? (
          <div key={i} className="h-5 w-[3px] border-l border-[#b4b6c8] bg-white" />
        ) : (
          <React.Fragment key={t[0]}>
            <button aria-label={t[0]} className={t[1] === "solo" ? "flex w-[23px] justify-center" : "flex w-[22px] justify-center"}>
              <Icon name={t[0]} size={16} />
            </button>
            {t[1] !== "solo" && (
              <button aria-label={t[0] + " menu"} className="flex w-[14px] justify-center pt-[2px]"><Caret dim={t[1] === "dim"} /></button>
            )}
          </React.Fragment>
        ),
      )}
    </div>
  );
}

/* ---------- left tool columns ---------- */
function ToolColumn({ label, items, frame, dots, menus: withMenu = [], active }: {
  label: string; items: string[]; frame: string; dots: string; menus?: string[]; active?: string;
}) {
  return (
    <div role="toolbar" aria-label={label} className={"flex flex-col border-r border-b border-[#bcb9ac] bg-linear-to-r from-[#eceffb] via-[#dadff0] to-[#b2b8ce] pb-[6px] " + frame}>
      <div className="flex h-[14px] shrink-0 items-center pl-[4px]">
        <div className={"h-[2px] bg-[repeating-linear-gradient(90deg,#8c8e9e_0_2px,transparent_2px_4px)] " + dots} />
      </div>
      {items.map((n, i) =>
        n === "|" ? (
          <div key={i} className="flex flex-1 items-center px-[4px]"><div className="h-px w-full bg-[#c6c3b4]" /></div>
        ) : (
          <div key={n} className="flex min-h-0 flex-[3] items-center">
            <button aria-label={n} className={n === active ? "ml-[3px] flex h-[23px] w-[23px] items-center justify-center rounded border border-[#74769a] bg-[#b8bcdc]" : "ml-[3px] flex h-[23px] w-[23px] items-center justify-center"}>
              <Icon name={n} />
            </button>
            {withMenu.includes(n) && <button aria-label={n + " menu"} className="ml-[2px] flex w-[9px] justify-center"><Caret /></button>}
          </div>
        ),
      )}
    </div>
  );
}

const featureTools = ["Extrude", "Extruded cut", "|", "Fillet", "Rib", "Shell", "Draft", "Hole wizard", "|", "Pattern", "|", "Reference geometry", "Curves", "|", "Instant3D"];
const viewTools = ["Front view", "Back view", "Left view", "Right view", "Top view", "Bottom view", "Isometric", "|", "New sketch", "Add point", "Convert path", "|", "Boss on plane", "Cut on plane"];
const sheetTools = ["Base flange", "Cone", "Edge flange", "Miter flange", "Hem", "Jog", "Bend", "Break", "Forming", "|", "Cut2", "Simple hole", "|", "Unfold", "Fold", "Flatten", "No bends", "|", "Rip", "Corner relief", "Vent"];
const surfaceTools = ["Surface extrude", "Surface revolve", "Surface sweep", "Surface loft", "Boundary surface", "Offset surface", "Planar surface", "Radiate", "Knit", "Thicken", "Extend", "Delete face", "Replace face", "Split body", "|", "Untrim 1", "Untrim 2", "Untrim 3", "Fillet surface", "|", "Reference geometry 2", "Curves 2"];

function ToolColumns() {
  return (
    <aside className="col-start-1 row-start-2 row-end-4 flex items-start border-b border-[#c4c2b6] bg-linear-to-b from-[#dcdeee] via-[#c9d0e2] to-[#b8bbd0]">
      <div className="flex w-[43px] flex-col items-start">
        <ToolColumn label="Features" items={featureTools} frame="h-[315px] w-[43px]" dots="w-[34px]" menus={["Extrude", "Extruded cut", "Fillet", "Pattern", "Reference geometry", "Curves"]} active="Instant3D" />
        <ToolColumn label="Standard views" items={viewTools} frame="h-[323px] w-[31px]" dots="w-[22px]" />
        <ToolColumn label="Macro" items={["Stop", "Record pause", "New macro", "Edit macro", "Run as user", "Run"]} frame="h-[164px] w-[31px]" dots="w-[22px]" />
        <ToolColumn label="Screen capture" items={["Snapshot", "Record video", "Stop video"]} frame="h-[93px] w-[31px]" dots="w-[22px]" />
      </div>
      <ToolColumn label="Sheet metal" items={sheetTools} frame="h-[473px] w-[44px]" dots="w-[34px]" />
      <ToolColumn label="Surfaces" items={surfaceTools} frame="h-[513px] w-[43px]" dots="w-[34px]" menus={["Reference geometry 2", "Curves 2"]} />
    </aside>
  );
}

/* ---------- command tabs and feature tree ---------- */
const commandTabs: [string, string][] = [
  ["特徵", "w-[57px] h-[16px]"], ["草圖", "w-[55px] h-[18px]"], ["評估", "w-[57px] h-[16px]"],
  ["DimXpert", "w-[59px] h-[16px]"], ["Office 產品", "w-[71px] h-[16px]"],
];

function CommandTabs() {
  return (
    <div role="tablist" aria-label="Command manager" className="col-start-1 col-end-3 row-start-1 flex items-start border-r-2 border-[#6b6f85] bg-[#cfd4e8] font-['Liberation_Sans','Noto_Sans_CJK_TC',sans-serif] text-[12px] leading-[14px]">
      {commandTabs.map(([t, c]) => (
        <button key={t} role="tab" aria-selected={t === "草圖"} className={(t === "草圖" ? "border-r-2 border-b-2 border-[#6c6e84] bg-[#d8dbea] text-[#222] " : "border-r-2 border-b-2 border-[#6c6e84] bg-[#aeb1c3] text-[#555763] ") + c}>
          {t}
        </button>
      ))}
    </div>
  );
}

const tree: [string, string, boolean][] = [
  ["annot", "註記", true], ["material", "材質 <未指定>", false], ["plane", "前基準面", false], ["plane", "上基準面", false],
  ["plane", "右基準面", false], ["origin", "原點", false], ["extrude", "伸長1", true], ["extrude", "伸長-薄件1", true],
  ["fillet", "圓角1", false], ["fillet", "圓角2", false], ["cut", "伸長2", true], ["sketch", "草圖4", false],
];

function FeaturePanel() {
  return (
    <section aria-label="Feature manager" className="col-start-2 row-start-2 flex flex-col border-r-2 border-[#6b6f85] bg-[#e1e4ed] font-['Liberation_Serif','Noto_Sans_CJK_TC',serif] text-[12px] text-black">
      <div className="h-[4px] shrink-0 border-y border-[#8e91a8] bg-[#cfd4e8]" />
      <div className="flex h-[27px] items-end border-b border-l border-[#a4a6b8] border-b-[#8e91a8] bg-[#cfd4e8] pl-[1px]">
        {["part", "property", "config", "dimx"].map((n, i) => (
          <button key={n} aria-label={n + " tab"} className={i === 0 ? "flex h-[22px] w-[27px] items-center justify-center rounded-t-md border border-b-0 border-[#7d8098] bg-[#e1e4ed]" : "ml-[1px] flex h-[21px] w-[27px] items-center justify-center rounded-t-md border border-b-0 border-[#7d8098] bg-[#b2b5c9]"}>
            <Icon name={n} />
          </button>
        ))}
        <button aria-label="Expand" className="mr-[4px] mb-[3px] ml-auto w-4 text-[18px] leading-[18px] text-[#445]">»</button>
      </div>
      <label className="mx-[2px] mt-[2px] flex h-[18px] items-center rounded-full border border-[#7e8298] bg-linear-to-b from-[#e4e6ee] to-white pl-[5px]">
        <Icon name="filter" size={13} />
        <input aria-label="Filter" className="min-w-0 flex-1 bg-transparent outline-none" />
      </label>
      <ul className="mt-[3px] flex h-[242px] flex-col">
        <li className="flex flex-1 items-center gap-[5px] pl-[2px]"><Icon name="part" />方筋</li>
        {tree.map(([icon, text, open], i) => (
          <li key={text} className="flex min-h-0 flex-1 items-stretch pl-[7px]">
            <span className="relative flex w-[14px] items-center">
              <span className={i === tree.length - 1 ? "absolute top-0 left-[4px] h-1/2 border-l border-dotted border-[#9a9ca8]" : "absolute top-0 left-[4px] h-full border-l border-dotted border-[#9a9ca8]"} />
              <span className="ml-[5px] w-[9px] border-t border-dotted border-[#9a9ca8]" />
              {open && (
                <button aria-label={"Expand " + text} className="absolute left-0 flex h-[9px] w-[9px] items-center justify-center border border-[#8c90a0] bg-white">
                  <svg viewBox="0 0 5 5" width="5" height="5"><path d="M0 2h5v1H0zM2 0h1v5H2z" /></svg>
                </button>
              )}
            </span>
            <span className="flex items-center gap-[5px] whitespace-nowrap"><Icon name={icon} />{text}</span>
          </li>
        ))}
      </ul>
      <div className="h-[2px] bg-[#2274d8]" />
    </section>
  );
}

/* ---------- graphics area ---------- */
const rows = [0, 0.14, 0.293, 0.446, 0.568, 0.69, 0.812, 0.914, 1];
const columns: { x: number; c: string[] }[] = [
  { x: 326, c: ["#8d98c6", "#96a2cf", "#a6b1db", "#b4bae0", "#adb2d0", "#9b9db6", "#7e8295", "#747a8b", "#767a8a"] },
  { x: 650, c: ["#a6aedb", "#b8bde5", "#c5caed", "#c9cceb", "#bec2da", "#a6a6b9", "#74758b", "#5e6078", "#5c5d75"] },
  { x: 1000, c: ["#c8ccef", "#cdd1f0", "#d6d9f3", "#dddff1", "#d5d4e2", "#b2b2c4", "#6c6d8d", "#484967", "#41405e"] },
  { x: 1300, c: ["#dee2f8", "#e0e4f8", "#e2e5f7", "#dfe1f0", "#d3d1e0", "#aba9c4", "#6a6a8c", "#484a6a", "#3f3e5c"] },
  { x: 1600, c: ["#eef3ff", "#f4f9ff", "#f2f6ff", "#e9eafa", "#d2d0e4", "#a9a7c3", "#777797", "#515272", "#474866"] },
  { x: 1760, c: ["#fdfeff", "#ffffff", "#ffffff", "#f4f2fc", "#d6d3e6", "#adabc6", "#82829f", "#5f607f", "#515370"] },
  { x: 1921, c: ["#fafbfe", "#ffffff", "#ffffff", "#f0eef9", "#d1cfe1", "#a8a7c2", "#8a8aa8", "#737390", "#686a88"] },
];

const OUTER = "M834 273C856 255 885 247 920 247C935 247 945 249 957 253L1459 400C1480 406 1498 418 1507 432C1521 440 1529 452 1529 469C1529 484 1524 493 1514 503L1249 783C1228 805 1190 819 1145 819C1125 819 1108 817 1091 812L597 666C560 654 534 632 534 607C534 590 540 580 558 563Z";
const INNER = "M857 309C872 296 892 289 917 289C930 289 940 290 951 293L1445 438C1470 446 1482 460 1479 480L1221 752C1203 769 1177 778 1145 778C1130 778 1117 778 1105 774L605 627C595 624 589 621 583 616C582 605 584 599 591 591Z";

function ModelView() {
  return (
    <svg viewBox="326 62 1595 982" preserveAspectRatio="xMidYMid slice" className="absolute inset-0 h-full w-full" role="img" aria-label="方筋 3D model">
      <defs>
        {columns.map((col, i) => (
          <React.Fragment key={col.x}>
            <linearGradient id={"bg" + i} x1="0" y1="0" x2="0" y2="1">
              {col.c.map((c, k) => <stop key={k} offset={rows[k]} stopColor={c} />)}
            </linearGradient>
            {i > 0 && (
              <>
                <linearGradient id={"ramp" + i} gradientUnits="userSpaceOnUse" x1={columns[i - 1].x} y1="0" x2={col.x} y2="0">
                  <stop offset="0" stopColor="#fff" stopOpacity="0" />
                  <stop offset="1" stopColor="#fff" />
                </linearGradient>
                <mask id={"mask" + i} maskUnits="userSpaceOnUse" x="326" y="62" width="1595" height="982">
                  <rect x="326" y="62" width="1595" height="982" fill={"url(#ramp" + i + ")"} />
                </mask>
              </>
            )}
          </React.Fragment>
        ))}
        <linearGradient id="side" x1="0" y1="0" x2="1" y2="1">
          <stop offset="0" stopColor="#5f5c00" /><stop offset="1" stopColor="#6b6800" />
        </linearGradient>
        <radialGradient id="flare"><stop offset="0" stopColor="#dde" stopOpacity=".16" /><stop offset=".9" stopColor="#dde" stopOpacity=".07" /><stop offset="1" stopColor="#dde" stopOpacity="0" /></radialGradient>
        <radialGradient id="spark"><stop offset="0" stopColor="#fff" stopOpacity=".5" /><stop offset="1" stopColor="#fff" stopOpacity="0" /></radialGradient>
        <radialGradient id="ring"><stop offset=".8" stopColor="#cdd0d8" stopOpacity=".02" /><stop offset=".96" stopColor="#cdd0d8" stopOpacity=".09" /><stop offset="1" stopColor="#cdd0d8" stopOpacity="0" /></radialGradient>
        <linearGradient id="cornerL" gradientUnits="userSpaceOnUse" x1="534" y1="600" x2="604" y2="640">
          <stop offset="0" stopColor="#868600" /><stop offset=".4" stopColor="#929200" /><stop offset="1" stopColor="#808000" />
        </linearGradient>
        <linearGradient id="cornerR" gradientUnits="userSpaceOnUse" x1="1450" y1="425" x2="1490" y2="470">
          <stop offset="0" stopColor="#808000" /><stop offset="1" stopColor="#989800" />
        </linearGradient>
        <linearGradient id="cornerB" gradientUnits="userSpaceOnUse" x1="1098" y1="800" x2="1245" y2="770">
          <stop offset="0" stopColor="#808000" /><stop offset="1" stopColor="#686600" />
        </linearGradient>
        <clipPath id="frame"><path d={OUTER + INNER} clipRule="evenodd" /></clipPath>
      </defs>
      {columns.map((col, i) => (
        <rect key={col.x} x="326" y="62" width="1595" height="982" fill={"url(#bg" + i + ")"} mask={i > 0 ? "url(#mask" + i + ")" : undefined} />
      ))}
      <ellipse cx="420" cy="896" rx="178" ry="131" fill="url(#ring)" />
      <ellipse cx="380" cy="1010" rx="196" ry="215" fill="url(#ring)" />
      <ellipse cx="753" cy="722" rx="124" ry="76" fill="url(#flare)" />
      <ellipse cx="631" cy="776" rx="54" ry="39" fill="url(#flare)" />
      <circle cx="862" cy="645" r="8" fill="url(#spark)" />

      <path d={OUTER + INNER} fillRule="evenodd" fill="#808000" />
      <g clipPath="url(#frame)">
        <path d="M838 281 575 562 591 591 857 309C842 303 842 290 838 281Z" fill="url(#side)" />
        <path d="M575 562C562 572 560 590 569 603L583 616V603L591 591Z" fill="#6c6a00" />
        <path d="M838 281C858 265 888 261 920 261L958 264 951 293H917C892 289 872 296 857 309Z" fill="#757300" />
        <path d="M1498 475 1233 755 1249 783 1514 503C1502 497 1502 490 1498 475Z" fill="url(#side)" />
        <path d="M1498 475C1508 462 1512 450 1508 433L1530 445V480L1514 503Z" fill="#6f6d00" />
        <path d="M1451 410 1445 438 1482 482 1494 465C1499 445 1496 430 1480 420Z" fill="url(#cornerR)" />
        <path d="M552 577C552 605 575 625 604 633L597 666C560 654 530 632 530 607Z" fill="url(#cornerL)" />
        <path d="M1098 779C1112 784 1125 786 1145 786C1180 786 1212 776 1233 755L1249 783 1190 825H1091Z" fill="url(#cornerB)" />
      </g>
      <g fill="none" stroke="#14140a" strokeWidth="1">
        <path d="M834 273C856 255 885 247 920 247C935 247 945 249 957 253L1459 400C1480 406 1498 418 1507 432" strokeWidth="1.400" />
        <path d={INNER} strokeWidth="1.200" />
        <path d="M833 274 558 563" strokeDasharray="36 16" />
        <path d="M838 281 575 562M841 280 578 561M845 298 579 578" />
        <path d="M838 281C842 290 842 303 857 309M575 562C579 575 577 585 591 591" />
        <path d="M848 272C868 258 895 254 920 254C935 254 946 255 958 258L1452 402C1478 409 1497 425 1498 447C1498 460 1492 467 1479 480" />
        <path d="M850 274C870 260 895 256 920 256C935 256 946 258 958 261L1452 405C1476 412 1495 427 1496 447C1496 456 1492 463 1486 470" />
        <path d="M845 298C865 280 890 272 920 272C935 272 946 274 956 278L1450 422C1475 430 1490 442 1493 463" />
        <path d="M958 259C958 270 957 285 951 293M1451 410C1451 420 1449 432 1445 438" />
        <path d="M1508 433C1512 450 1508 462 1498 475L1233 755C1212 776 1180 786 1145 786C1125 786 1112 784 1098 779L604 633C575 625 552 605 552 577" />
        <path d="M1506 434C1510 450 1506 461 1495 474L1231 753C1210 774 1180 784 1145 784C1125 784 1112 781 1099 777L606 631C577 623 554 603 554 575" />
        <path d="M1508 445C1520 456 1518 478 1503 491L1237 772C1215 793 1180 803 1143 803C1125 803 1110 801 1096 796L602 652C570 642 546 620 547 595C548 585 550 577 556 570" />
        <path d="M1498 475C1502 490 1502 497 1514 503M1233 755C1237 770 1237 778 1249 783M1098 779C1098 795 1097 805 1091 812M604 633C604 648 602 660 597 666" />
        <path d="M575 562C562 575 560 590 569 602C575 612 583 616 590 621M577 561C565 575 563 588 571 602M579 578C570 588 569 598 572 604" />
      </g>
      <g fill="none" stroke="#8f8f88" strokeWidth="1.200">
        <path d="M561 563 814 298C842 269 880 261 920 261C935 261 946 263 957 266L1451 410C1475 416 1495 424 1507 432" />
        <path d="M1507 432C1521 440 1529 452 1529 469C1529 484 1524 493 1514 503L1249 783C1228 805 1190 819 1145 819C1125 819 1108 817 1091 812L597 666C560 654 534 632 534 607C534 590 540 580 558 563" strokeOpacity=".7" />
      </g>
      <path d="M917 323v8M913 327h8M651 603v8M647 607h8M1410 469v8M1406 473h8M1145 749v8M1141 753h8" stroke="#7c7c80" />

      <g strokeWidth="3">
        <path d="M368 984 346 978" stroke="#1c6a28" />
        <path d="m341 975 12-1-4 9z" fill="#185c22" />
        <path d="m368 984 10-11" stroke="#a81818" />
        <path d="m384 968-4 9-7-5z" fill="#c02020" />
        <path d="M368 984v-16" stroke="#1a1ab8" />
        <path d="m368 958 5 11h-10z" fill="#3038e8" />
      </g>
      <g fontFamily="Liberation Serif, serif" fontSize="12">
        <text x="364" y="957" fill="#1a1aff">Z</text>
        <text x="380" y="970" fill="#e81c1c">X</text>
        <text x="335" y="979" fill="#14962a">Y</text>
      </g>
    </svg>
  );
}

function Viewport() {
  const tools: [string, boolean][] = [["Zoom to fit", false], ["Zoom to area", false], ["Previous view", false], ["Section view", false], ["View orientation", true], ["Display style", true], ["Hide or show", true], ["Appearance", true], ["Scene", true]];
  return (
    <main className="relative col-start-3 row-start-1 row-end-3 overflow-hidden">
      <ModelView />
      <div role="toolbar" aria-label="View" className="absolute top-[5px] left-[42%] flex h-[18px] items-center gap-[4px]">
        {tools.map(([n, m]) => (
          <div key={n} className="flex items-center">
            <button aria-label={n} className="flex w-[19px] justify-center"><Icon name={n} size={16} /></button>
            {m && <button aria-label={n + " menu"} className="flex w-[10px] justify-center pt-[2px]"><Caret /></button>}
          </div>
        ))}
      </div>
      <WindowButtons size="absolute top-[7px] right-[9px] flex gap-[7px]" />
      <div className="absolute top-[51px] right-0 flex w-[25px] flex-col">
        {["Home", "Design library", "File explorer", "Search", "View palette", "Appearances pane"].map((n, i) => (
          <button key={n} aria-label={n} className={i === 1 ? "flex h-[25px] items-center justify-center rounded-l-md border border-r-0 border-[#888ca4] bg-[#e4e6f0]" : "flex h-[25px] items-center justify-center rounded-l-md border border-r-0 border-[#888ca4] bg-[#b2b5c8]"}>
            <Icon name={n} size={16} />
          </button>
        ))}
      </div>
      <button aria-label="Collapse panel" className="absolute top-[477px] left-0 flex h-[29px] w-[8px] flex-col items-center justify-around rounded-r-md border border-l-0 border-[#5c5e74] bg-[#e1e4ed] py-[2px]">
        {[0, 1, 2].map((k) => <svg key={k} viewBox="0 0 3 4" width="3" height="4"><path d="M3 0v4L0 2z" fill="#3c3c7c" /></svg>)}
      </button>
    </main>
  );
}

/* ---------- bottom ---------- */
function BottomTabs() {
  return (
    <div className="col-start-2 col-end-4 row-start-3 flex items-start border-t border-b border-t-[#1c1c24] border-b-[#8a8d98] bg-[#e1e4ed] font-['Liberation_Sans','Noto_Sans_CJK_TC',sans-serif] text-[12px] leading-[12px] text-black">
      {["M1 1h1v8H1zM8 1v8L3 5z", "M7 1v8L2 5z", "M3 1v8l5-4z", "M8 1h1v8H8zM2 1v8l5-4z"].map((d, i) => (
        <button key={d} aria-label={"Scroll tabs " + (i + 1)} className="flex h-[15px] w-[16px] items-center justify-center border border-[#9a9cb0] bg-[#b4b6c8]">
          <svg viewBox="0 0 10 10" width="10" height="10"><path d={d} fill="#8486a0" /></svg>
        </button>
      ))}
      <button className="ml-[2px] h-[15px] w-[46px] border-x-2 border-b-2 border-[#6c6e84] bg-[#e1e4ed]">模型</button>
      <button className="h-[14px] w-[77px] border-r-2 border-b-2 border-[#6c6e84] bg-[#aeb1c3] whitespace-nowrap">動作研究 1</button>
    </div>
  );
}

function StatusBar() {
  return (
    <footer className="flex h-[23px] shrink-0 items-center justify-between bg-linear-to-b from-[#ced2e2] to-[#a6aaba] pl-[2px] font-['Liberation_Serif','Noto_Sans_CJK_TC',serif] text-[12px] text-black">
      <span className="pb-[4px]">Solid Works Office Premium 2008</span>
      <div className="relative flex h-full items-center gap-[7px] pr-[15px]">
        <span className="h-[14px] w-px bg-white" />
        <span className="h-[14px] w-px bg-white" />
        <span className="ml-[4px] w-[84px] pb-[4px] whitespace-nowrap">正在編輯：零件</span>
        <span className="h-[14px] w-px bg-white" />
        <span className="h-[14px] w-px bg-white" />
        <svg viewBox="0 0 14 14" width="14" height="14" className="mb-[4px] ml-[11px]"><path d="M1 1h12v12H1z" fill="#fff" stroke="#3a6ab8" strokeWidth="2" /><circle cx="7" cy="7" r="3" fill="#2cb03c" /></svg>
        <svg viewBox="0 0 16 16" width="14" height="16" className="ml-[42px]"><path d="m2 8 7-7 5 1 1 5-7 7-3-1z" fill="#f2b82b" stroke="#8a5a00" /><circle cx="11.500" cy="4.500" r="1.500" fill="#fff" stroke="#8a5a00" /></svg>
        <a href="http://www.3dportal.cn" className="absolute top-[1px] right-[17px] font-['DejaVu_Sans','Noto_Sans_CJK_SC',sans-serif] text-[18px] leading-[20px] whitespace-nowrap text-white [-webkit-text-stroke:3px_#ee2c2c] [paint-order:stroke]">三维网www.3dportal.cn</a>
      </div>
    </footer>
  );
}

export default function App() {
  return (
    <div className="flex h-screen w-full flex-col overflow-hidden border-t border-[#33333b] bg-[#cfd4e8]">
      <div className="flex min-h-0 flex-1 flex-col border-l-2 border-[#26262e]">
        <TitleBar />
        <SketchToolbar />
        <div className="grid min-h-0 flex-1 grid-cols-[130px_195px_minmax(0,1fr)] grid-rows-[19px_minmax(0,1fr)_16px]">
          <CommandTabs />
          <ToolColumns />
          <FeaturePanel />
          <Viewport />
          <BottomTabs />
        </div>
        <StatusBar />
      </div>
      <div className="flex h-[2px] shrink-0 bg-[#2c66d8]"><div className="h-full w-[88px] bg-[#3c9a3c]" /></div>
    </div>
  );
}
